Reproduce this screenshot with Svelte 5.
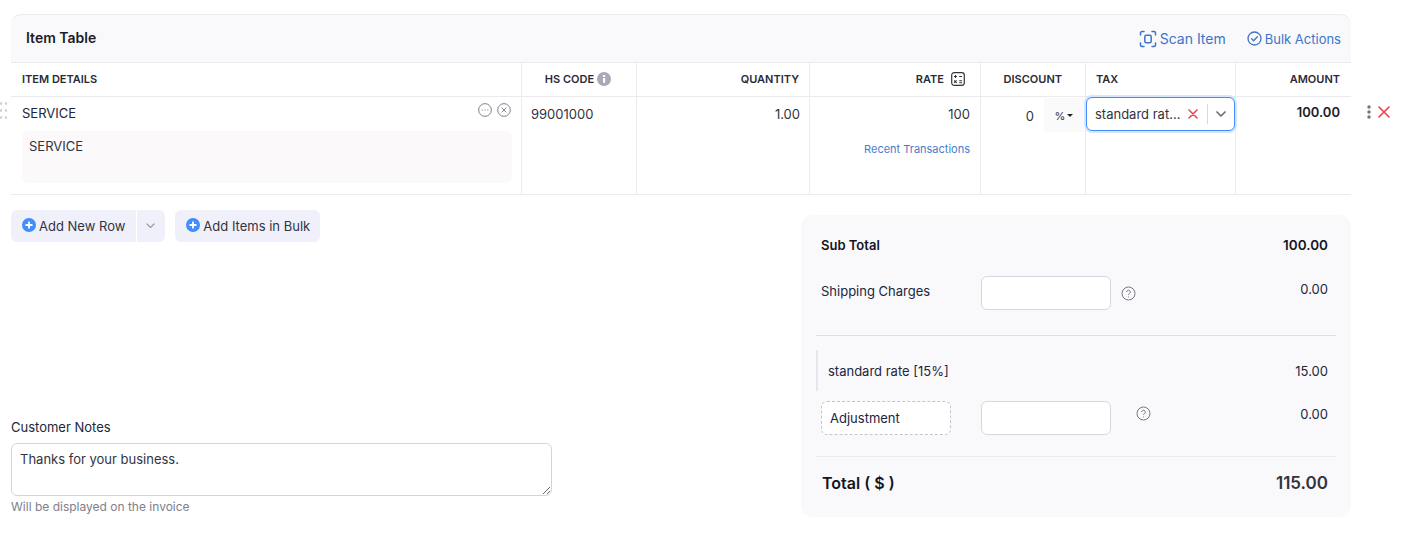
<script>
  let notes = "Thanks for your business."
  const total = "115.00"
</script>

<div class="page">
  <section class="table">
    <header class="bar">
      <h2>Item Table</h2>
      <div class="bar-links">
        <span class="link scan">
          <svg width="18" height="18" viewBox="0 0 18 18" fill="none" stroke="#3b74c9" stroke-width="1.5" stroke-linecap="round">
            <path d="M1.500 5V3a1.500 1.500 0 0 1 1.500-1.500h2M13 1.500h2A1.500 1.500 0 0 1 16.500 3v2M16.500 13v2a1.500 1.500 0 0 1-1.500 1.500h-2M5 16.500H3A1.500 1.500 0 0 1 1.500 15v-2" />
            <rect x="5.800" y="5.300" width="6.400" height="7.400" rx="1.500" />
          </svg>
          Scan Item
        </span>
        <span class="link bulk">
          <svg width="15" height="15" viewBox="0 0 15 15" fill="none" stroke="#3b74c9" stroke-width="1.300" stroke-linecap="round" stroke-linejoin="round">
            <circle cx="7.500" cy="7.500" r="6.500" />
            <path d="M4.600 7.700l2 2 3.800-4" />
          </svg>
          Bulk Actions
        </span>
      </div>
    </header>

    <div class="grid head">
      <div class="th">ITEM DETAILS</div>
      <div class="th center">
        HS CODE
        <svg class="info" width="14" height="14" viewBox="0 0 14 14">
          <circle cx="7" cy="7" r="7" fill="#a9a9b8" />
          <rect x="6" y="6" width="2.200" height="4.800" fill="#fff" />
          <rect x="6" y="3" width="2.200" height="2" fill="#fff" />
        </svg>
      </div>
      <div class="th right">QUANTITY</div>
      <div class="th right rate-head">
        RATE
        <svg width="14" height="14" viewBox="0 0 14 14" fill="none">
          <rect x="0.700" y="0.700" width="12.600" height="12.600" rx="2.500" stroke="#33333f" stroke-width="1.200" />
          <path d="M3 4.500h3M4.500 3v3M8.200 4.500h2.800M3.200 8.500l2.400 2.400M5.600 8.500l-2.400 2.400M8.200 8.800h2.800M8.200 10.800h2.800" stroke="#33333f" stroke-width="1.100" />
        </svg>
      </div>
      <div class="th right discount-head">DISCOUNT</div>
      <div class="th">TAX</div>
      <div class="th right amount-head">AMOUNT</div>
    </div>

    <div class="grid row">
      <div class="td details">
        <div class="name-line">
          <span>SERVICE</span>
          <span class="mini-icons">
            <svg width="14" height="14" viewBox="0 0 15 15" fill="none" stroke="#77777f">
              <circle cx="7.500" cy="7.500" r="6.800" />
              <path d="M4 7.500h1M7 7.500h1M10 7.500h1" stroke-width="1.300" />
            </svg>
            <svg width="14" height="14" viewBox="0 0 15 15" fill="none" stroke="#77777f">
              <circle cx="7.500" cy="7.500" r="6.800" />
              <path d="M5 5l5 5M10 5l-5 5" />
            </svg>
          </span>
        </div>
        <div class="desc">SERVICE</div>
      </div>
      <div class="td hs">99001000</div>
      <div class="td right qty">1.00</div>
      <div class="td right rate">
        <div>100</div>
        <div class="recent">Recent Transactions</div>
      </div>
      <div class="td discount">
        <span>0</span>
        <span class="unit">%<i class="caret"></i></span>
      </div>
      <div class="td tax">
        <div class="tax-select">
          <span class="tax-val">standard rat...</span>
          <svg width="10" height="10" viewBox="0 0 10 10" stroke="#e8404f" stroke-width="1.500" stroke-linecap="round">
            <path d="M1 1l8 8M9 1l-8 8" />
          </svg>
          <span class="tax-sep"></span>
          <svg class="tax-chev" width="10" height="6" viewBox="0 0 10 6" fill="none" stroke="#6d6d78" stroke-width="1.700" stroke-linecap="round" stroke-linejoin="round">
            <path d="M1 1l4 4 4-4" />
          </svg>
        </div>
      </div>
      <div class="td right amount">100.00</div>

      <span class="drag">
        {#each Array(6) as _}
          <i></i>
        {/each}
      </span>
      <span class="row-actions">
        <svg width="4" height="14" viewBox="0 0 4 14" fill="#77776a">
          <circle cx="2" cy="2" r="1.700" />
          <circle cx="2" cy="7" r="1.700" />
          <circle cx="2" cy="12" r="1.700" />
        </svg>
        <svg width="12" height="12" viewBox="0 0 12 12" stroke="#e8404f" stroke-width="1.600" stroke-linecap="round">
          <path d="M1 1l10 10M11 1L1 11" />
        </svg>
      </span>
    </div>
  </section>

  <div class="lower">
    <div class="left">
      <div class="actions">
        <div class="split">
          <button class="btn main">
            <svg class="plus" width="14" height="14" viewBox="0 0 14 14">
              <circle cx="7" cy="7" r="7" fill="#408dfb" />
              <path d="M7 3.500v7M3.500 7h7" stroke="#fff" stroke-width="1.800" />
            </svg>
            Add New Row
          </button>
          <button class="btn drop" aria-label="More">
            <svg width="9" height="6" viewBox="0 0 9 6" fill="none" stroke="#9a9aa5" stroke-width="1.200" stroke-linecap="round">
              <path d="M1 1l3.500 3.500L8 1" />
            </svg>
          </button>
        </div>
        <button class="btn bulk-btn">
          <svg class="plus" width="14" height="14" viewBox="0 0 14 14">
            <circle cx="7" cy="7" r="7" fill="#408dfb" />
            <path d="M7 3.500v7M3.500 7h7" stroke="#fff" stroke-width="1.800" />
          </svg>
          Add Items in Bulk
        </button>
      </div>

      <div class="notes">
        <label for="notes">Customer Notes</label>
        <textarea id="notes" bind:value={notes}></textarea>
        <p>Will be displayed on the invoice</p>
      </div>
    </div>

    <aside class="summary">
      <div class="s-row sub">
        <span>Sub Total</span>
        <span class="sub-val">100.00</span>
      </div>
      <div class="s-row ship">
        <span class="s-label">Shipping Charges</span>
        <span class="box"></span>
        <svg class="help" width="15" height="15" viewBox="0 0 15 15" fill="none" stroke="#777783">
          <circle cx="7.500" cy="7.500" r="6.500" />
          <path d="M5.700 6a1.800 1.800 0 1 1 2.700 1.600c-.6.400-.9.700-.9 1.400" />
          <path d="M7.500 10.500v.8" />
        </svg>
        <span class="val">0.00</span>
      </div>
      <hr />
      <div class="s-row taxline">
        <span>standard rate [15%]</span>
        <span>15.00</span>
      </div>
      <div class="s-row adjust">
        <span class="dashed">Adjustment</span>
        <span class="box"></span>
        <svg class="help" width="15" height="15" viewBox="0 0 15 15" fill="none" stroke="#777783">
          <circle cx="7.500" cy="7.500" r="6.500" />
          <path d="M5.700 6a1.800 1.800 0 1 1 2.700 1.600c-.6.400-.9.700-.9 1.400" />
          <path d="M7.500 10.500v.8" />
        </svg>
        <span class="val">0.00</span>
      </div>
      <hr class="light" />
      <div class="s-row grand">
        <span>Total ( $ )</span>
        <span class="grand-val">{total}</span>
      </div>
    </aside>
  </div>
</div>

<style>
  :global(body) {
    background: #fff;
    font-family: Inter, "Liberation Sans", sans-serif;
    font-size: 13px;
    color: #21263c;
  }
  .page {
    width: 1340px;
    height: 533px;
    box-sizing: border-box;
    margin-left: 11px;
    padding-top: 14px;
    display: flex;
    flex-direction: column;
  }

  .bar {
    height: 47px;
    background: #f9f9fb;
    border-top: 1px solid #ebebef;
    border-bottom: 1px solid #ebebef;
    border-radius: 10px 10px 0 0;
    display: flex;
    align-items: center;
    justify-content: space-between;
    padding: 0 10px 0 15px;
  }
  h2 {
    margin: 0 0 2px;
    font-size: 14px;
    font-weight: 600;
    color: #1c1c28;
  }
  .bar-links {
    display: flex;
    align-items: center;
    gap: 21px;
  }
  .link {
    display: flex;
    align-items: center;
    color: #3b74c9;
  }
  .scan {
    font-size: 14px;
    gap: 3px;
  }
  .bulk {
    gap: 3px;
  }

  .grid {
    display: grid;
    grid-template-columns: 510px 115px 173px 171px 105px 150px 116px;
  }
  .head {
    height: 33px;
    border-bottom: 1px solid #ebebef;
  }
  .th {
    font-size: 11px;
    font-weight: 600;
    color: #2b2b36;
    line-height: 30px;
    padding: 0 10px 2px;
    border-left: 1px solid #ebebef;
    display: flex;
    align-items: center;
    gap: 3px;
    min-width: 0;
    white-space: nowrap;
  }
  .th:first-child,
  .td:first-child {
    border-left: none;
    padding-left: 11px;
  }
  .th.center {
    justify-content: center;
    padding-right: 12px;
  }
  .th.right {
    justify-content: flex-end;
  }
  .rate-head {
    gap: 7px;
    padding-right: 15px;
  }
  .discount-head {
    padding-right: 23px;
  }
  .amount-head {
    padding-right: 11px;
  }

  .row {
    position: relative;
    height: 97px;
    border-bottom: 1px solid #ebebef;
  }
  .td {
    border-left: 1px solid #ebebef;
    padding: 9px 9px 0;
    line-height: 17px;
    color: #33333f;
    min-width: 0;
    box-sizing: border-box;
  }
  .td.right {
    text-align: right;
  }
  .name-line {
    display: flex;
    justify-content: space-between;
    color: #21263c;
    margin-top: -1px;
  }
  .mini-icons {
    display: flex;
    gap: 5px;
    margin-top: -2px;
    margin-right: 1px;
  }
  .desc {
    margin-top: 9px;
    height: 52px;
    box-sizing: border-box;
    background: #fbf9fa;
    border-radius: 6px;
    padding: 7px 7px 0;
    line-height: 17px;
  }
  .td.qty {
    padding-right: 9px;
  }
  .td.rate {
    padding-right: 10px;
  }
  .recent {
    margin-top: 18px;
    font-size: 11px;
    color: #4a7bcb;
  }
  .discount {
    padding: 1px 1px 0 0;
    display: flex;
    justify-content: flex-end;
    align-items: flex-start;
    gap: 10px;
  }
  .discount > span:first-child {
    margin-top: 10px;
  }
  .unit {
    width: 40px;
    height: 34px;
    box-sizing: border-box;
    background: #fafafa;
    font-size: 11px;
    display: flex;
    align-items: center;
    justify-content: center;
    gap: 2px;
    padding-top: 2px;
  }
  .caret {
    border: 3px solid transparent;
    border-top: 3px solid #222;
    border-bottom: none;
    margin-top: -1px;
  }
  .tax {
    padding: 0;
  }
  .tax-select {
    width: 149px;
    height: 34px;
    box-sizing: border-box;
    background: #fff;
    border: 1px solid #408dfb;
    border-radius: 6px;
    box-shadow: 0 0 0 2px #d5e6fe;
    display: flex;
    align-items: center;
    padding: 0 8px;
    position: relative;
  }
  .tax-val {
    width: 93px;
    white-space: nowrap;
    color: #33333f;
  }
  .tax-sep {
    width: 1px;
    height: 20px;
    background: #d7d7dd;
    margin: 0 8px 0 9px;
  }
  .td.amount {
    font-weight: 600;
    color: #1c1c28;
    padding-right: 11px;
    padding-top: 7px;
  }

  .drag {
    position: absolute;
    left: -11px;
    top: 5px;
    width: 7px;
    display: grid;
    grid-template-columns: 2px 2px;
    gap: 4px 3px;
  }
  .drag i {
    width: 2px;
    height: 3px;
    background: #cfcfd6;
    border-radius: 1px;
  }
  .row-actions {
    position: absolute;
    left: 1356px;
    top: 8px;
    display: flex;
    align-items: center;
    gap: 7px;
  }

  .lower {
    flex: 1;
    display: flex;
    justify-content: space-between;
    padding-top: 15px;
  }
  .left {
    width: 541px;
    height: 304px;
    display: flex;
    flex-direction: column;
    justify-content: space-between;
  }
  .actions {
    display: flex;
    gap: 10px;
  }
  .split {
    display: flex;
    gap: 1px;
  }
  .btn {
    height: 32px;
    box-sizing: border-box;
    border: none;
    border-radius: 6px;
    background: #f0f0fa;
    color: #33333f;
    font: inherit;
    padding: 0 11px;
    display: flex;
    align-items: center;
    gap: 3px;
  }
  .bulk-btn {
    padding-right: 10px;
  }
  .main {
    border-radius: 6px 0 0 6px;
  }
  .drop {
    width: 28px;
    padding: 0 2px 0 0;
    justify-content: center;
    border-radius: 0 6px 6px 0;
  }
  .plus {
    margin-top: -2px;
  }

  .notes label {
    display: block;
    line-height: 16px;
    color: #21263c;
    margin-bottom: 8px;
  }
  textarea {
    display: block;
    width: 541px;
    height: 53px;
    box-sizing: border-box;
    border: 1px solid #d4d4da;
    border-radius: 6px;
    padding: 7px 8px;
    font: inherit;
    line-height: 17px;
    color: #33333f;
    outline: none;
  }
  .notes p {
    margin: 3px 0 0;
    font-size: 12px;
    line-height: 15px;
    color: #80808c;
    height: 15px;
  }

  .summary {
    width: 550px;
    height: 302px;
    margin-top: 5px;
    box-sizing: border-box;
    background: #f9f9fb;
    border-radius: 12px;
    padding: 0 15px;
  }
  .s-row {
    position: relative;
    display: flex;
    justify-content: space-between;
    padding: 0 8px 0 5px;
  }
  .sub {
    padding-top: 22px;
    line-height: 17px;
    font-weight: 600;
    color: #15151f;
  }
  .sub-val {
    font-size: 13.5px;
  }
  .ship {
    margin-top: 22px;
    height: 59px;
    justify-content: flex-start;
  }
  .s-label {
    width: 160px;
    padding-top: 7px;
    line-height: 17px;
  }
  .box {
    width: 130px;
    height: 34px;
    box-sizing: border-box;
    background: #fff;
    border: 1px solid #d6d6df;
    border-radius: 6px;
  }
  .help {
    margin: 10px 0 0 10px;
  }
  .val {
    margin-left: auto;
    line-height: 17px;
    padding-top: 5px;
  }
  hr {
    margin: 0;
    border: none;
    border-top: 1px solid #dfdfe4;
  }
  hr.light {
    border-top-color: #e9e9ee;
  }
  .taxline {
    margin-top: 14px;
    height: 41px;
    align-items: center;
    border-left: 2px solid #e6e6ec;
    padding-left: 10px;
  }
  .adjust {
    margin-top: 10px;
    height: 55px;
    justify-content: flex-start;
  }
  .dashed {
    width: 130px;
    height: 34px;
    box-sizing: border-box;
    background: #fff;
    border: 1px dashed #c4c4cc;
    border-radius: 6px;
    line-height: 32px;
    padding-left: 8px;
    margin-right: 30px;
  }
  .adjust .help {
    margin: 5px 0 0 25px;
  }
  .grand {
    padding-top: 16px;
    padding-left: 6px;
    font-size: 16px;
    font-weight: 600;
    line-height: 20px;
    color: #15151f;
  }
  .grand-val {
    font-size: 17px;
    color: #33333f;
  }
</style>
